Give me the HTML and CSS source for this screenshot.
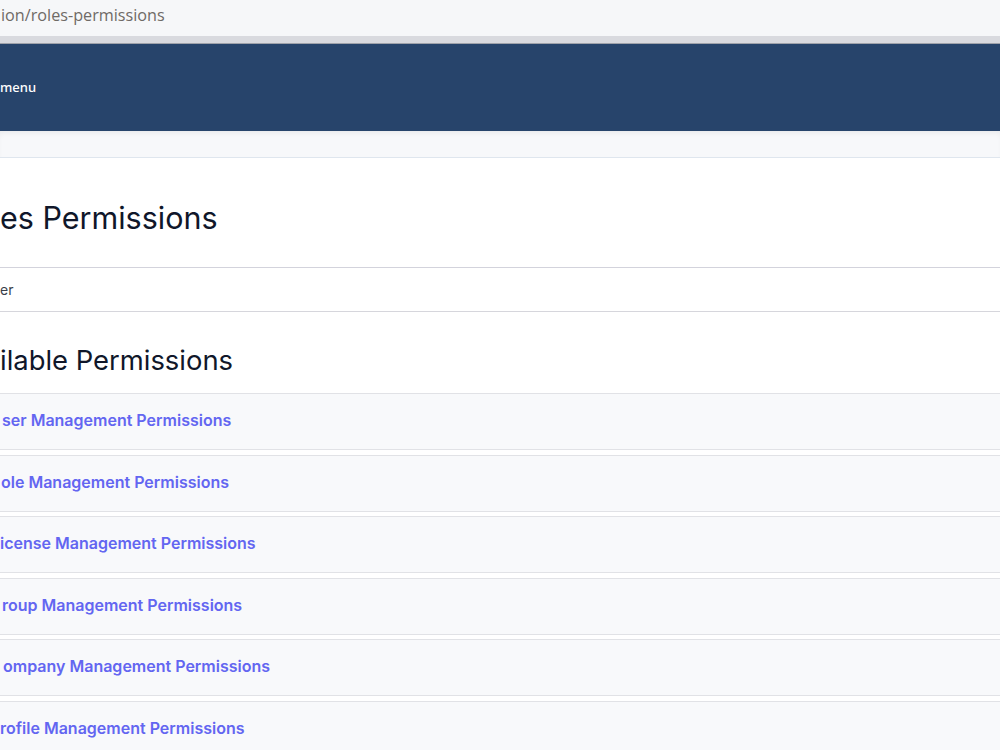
FILE: index.html
```html
<!DOCTYPE html>
<html lang="en">
<head>
    <meta charset="UTF-8">
    <meta name="viewport" content="width=device-width, initial-scale=1.0">
    <title>Roles Permissions</title>
    <link rel="stylesheet" href="styles.css">
</head>
<body>
    <div class="urlbar">
        <span class="url">ion/roles-permissions</span>
    </div>
    <div class="tabstrip"></div>

    <nav class="navbar">
        <span class="nav-toggle">menu</span>
    </nav>
    <div class="subbar"></div>

    <main class="content">
        <div class="page-head">
            <h1>es Permissions</h1>
        </div>

        <div class="role-row">er</div>

        <h2>ilable Permissions</h2>

        <div class="accordion" id="permission-list">
            <!-- items added below -->
        </div>
    </main>

    <script>
        const groups = [
            ["ser Management Permissions", 2],
            ["ole Management Permissions", 1],
            ["icense Management Permissions", 0],
            ["roup Management Permissions", 2],
            ["ompany Management Permissions", 3],
            ["rofile Management Permissions", 0]
        ];

        const list = document.getElementById("permission-list");

        // Build accordion items
        groups.forEach(([name, offset]) => {
            const item = document.createElement('div');
            item.className = 'accordion-item';
            item.innerHTML = `<button class="accordion-btn" style="padding-left: ${offset}px">${name}</button>`;
            list.appendChild(item);
        });
    </script>
</body>
</html>
```

FILE: styles.css
```css
:root {
    --navy: #27446b;
    --indigo: #6366f1;
    --border: #e1e2e6;
    --light-bg: #f8f9fb;
    --title: #10172a;
}

html, body {
    overflow: hidden;
}

body {
    margin: 0;
    font-family: Inter, 'Noto Sans', sans-serif;
    background: #ffffff;
    color: var(--title);
}

.urlbar {
    height: 36px;
    background: #f6f7f9;
    display: flex;
    align-items: center;
    white-space: nowrap;
    padding-bottom: 6px;
    box-sizing: border-box;
}

.url {
    margin-left: 1px;
    font-family: 'Open Sans', 'Noto Sans', sans-serif;
    font-size: 16.2px;
    color: #6f6a66;
}

.tabstrip {
    height: 7px;
    background: #d9dadf;
    border-bottom: 1px solid #9fa2aa;
}

.navbar {
    height: 87px;
    background: var(--navy);
    display: flex;
    align-items: center;
    white-space: nowrap;
}

.nav-toggle {
    color: #ffffff;
    font-family: 'Noto Sans', sans-serif;
    font-size: 13px;
    font-weight: 500;
    padding-bottom: 1px;
}

.subbar {
    height: 26px;
    background: #f7f8fa;
    border-bottom: 1px solid #dfe6ee;
    box-shadow: inset 0 4px 6px -3px rgba(0, 0, 0, 0.08);
}

.page-head {
    height: 110px;
    box-sizing: border-box;
    padding-top: 40px;
    border-bottom: 1px solid #d3d3dc;
}

h1 {
    margin: 0;
    font-size: 30.5px;
    font-weight: 400;
    line-height: 40px;
    white-space: nowrap;
}

.role-row {
    height: 43px;
    display: flex;
    align-items: center;
    font-size: 14px;
    color: #3a3f4a;
    border-bottom: 1px solid #d6d6dc;
}

h2 {
    margin: 30px 0 15px;
    font-size: 27.4px;
    font-weight: 400;
    line-height: 36px;
    white-space: nowrap;
}

.accordion-item {
    height: 57px;
    box-sizing: border-box;
    margin-bottom: 4.6px;
    background: var(--light-bg);
    border-top: 1px solid var(--border);
    border-bottom: 1px solid var(--border);
}

.accordion-btn {
    width: 100%;
    height: 100%;
    display: flex;
    align-items: center;
    padding: 0 0 3px 0;
    border: none;
    background: none;
    font-family: Inter, sans-serif;
    font-size: 16px;
    font-weight: 600;
    color: var(--indigo);
    white-space: nowrap;
    cursor: pointer;
}
```
